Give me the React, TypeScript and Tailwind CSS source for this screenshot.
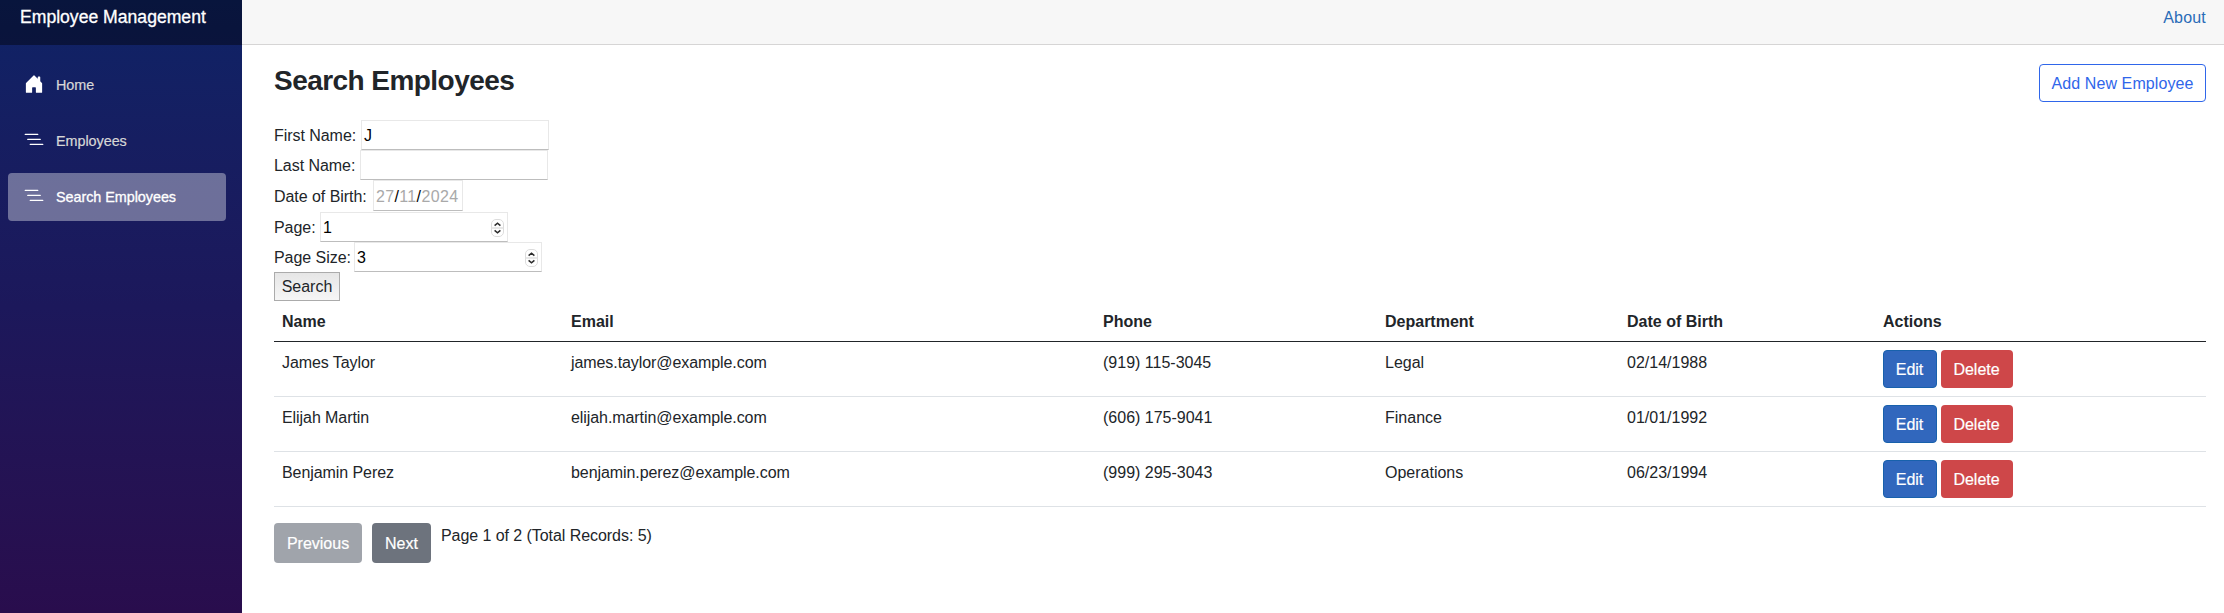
import { ReactNode } from "react";

const employees = [
  { name: "James Taylor", email: "james.taylor@example.com", phone: "(919) 115-3045", department: "Legal", dob: "02/14/1988" },
  { name: "Elijah Martin", email: "elijah.martin@example.com", phone: "(606) 175-9041", department: "Finance", dob: "01/01/1992" },
  { name: "Benjamin Perez", email: "benjamin.perez@example.com", phone: "(999) 295-3043", department: "Operations", dob: "06/23/1994" },
];

const HOUSE =
  "M6.5 14.5v-3.505c0-.245.25-.495.5-.495h2c.25 0 .5.25.5.5v3.5a.5.5 0 0 0 .5.5h4a.5.5 0 0 0 .5-.5v-7a.5.5 0 0 0-.146-.354L13 5.793V2.5a.5.5 0 0 0-.5-.5h-1a.5.5 0 0 0-.5.5v1.293L8.354 1.146a.5.5 0 0 0-.708 0l-6 6A.5.5 0 0 0 1.5 7.5v7a.5.5 0 0 0 .5.5h4a.5.5 0 0 0 .5-.5Z";
const LIST =
  "M4.5 11.5A.5.5 0 0 1 5 11h10a.5.5 0 0 1 0 1H5a.5.5 0 0 1-.5-.5zm-2-4A.5.5 0 0 1 3 7h10a.5.5 0 0 1 0 1H3a.5.5 0 0 1-.5-.5zm-2-4A.5.5 0 0 1 1 3h10a.5.5 0 0 1 0 1H1a.5.5 0 0 1-.5-.5z";

function NavItem({ icon, label, active }: { icon: string; label: string; active?: boolean }) {
  return (
    <a
      className={
        "flex h-12 items-center rounded pl-4 text-[14.4px] tracking-[-0.05px] " +
        (active ? "bg-white/37 text-white [-webkit-text-stroke:0.3px_white]" : "text-[#d7d7d7] [-webkit-text-stroke:0.2px_#d7d7d7]")
      }
    >
      <svg className="mr-3 mb-0.5 size-5" viewBox="0 0 16 16" fill="white">
        <path d={icon} />
      </svg>
      <span className="pt-0.5">{label}</span>
    </a>
  );
}

function Field({ label, labelClass, boxClass, children }: { label: string; labelClass: string; boxClass: string; children?: ReactNode }) {
  return (
    <div className="flex items-center">
      <label className={"shrink-0 whitespace-nowrap pt-0.5 tracking-[-0.05px] " + labelClass}>{label}</label>
      <div className={"flex items-center border border-[#e8e8e8] border-b-[#bdbdbd] bg-white text-black " + boxClass}>
        {children}
      </div>
    </div>
  );
}

function Spinner() {
  return (
    <svg className="ml-auto mr-[3px] h-[18px] w-[13px]" viewBox="0 0 13 18" fill="none">
      <rect x="0.5" y="0.5" width="12" height="17" rx="4.5" fill="white" stroke="#dcdcdc" />
      <path d="M0.5 9h12" stroke="#e0e0e0" strokeWidth="1.5" />
      <path d="M3.6 6.6L6.5 4.2L9.4 6.6M3.6 11.4L6.5 13.8L9.4 11.4" stroke="#2b2b2b" strokeWidth="1.5" />
    </svg>
  );
}

export default function App() {
  return (
    <div className="flex h-[613px] w-[2224px] overflow-hidden bg-white font-['Liberation_Sans',Arial,sans-serif] text-base text-[#212529]">
      <aside className="flex w-[242px] shrink-0 flex-col bg-linear-to-b from-[#0e2366] via-[#1c185b] to-[#290d4d]">
        <div className="flex h-[45px] shrink-0 items-start bg-black/40 pt-[5px] pl-5 text-[17.6px] leading-6 text-white [-webkit-text-stroke:0.3px_white]">
          Employee Management
        </div>
        <nav className="flex flex-col gap-2 pt-4 pr-4 pl-2">
          <NavItem icon={HOUSE} label="Home" />
          <NavItem icon={LIST} label="Employees" />
          <NavItem icon={LIST} label="Search Employees" active />
        </nav>
      </aside>

      <main className="flex min-w-0 flex-1 flex-col">
        <div className="flex h-[45px] shrink-0 items-start justify-end border-b border-[#d6d5d5] bg-[#f7f7f7] pt-[6px] pr-[18px] text-[#2a6cb8]">
          <a className="tracking-[0.2px]">About</a>
        </div>
        <div className="flex flex-col pr-[18px] pl-8">
          <div className="flex h-[75px] items-start justify-between pt-[19px]">
            <h3 className="text-[28px] leading-[34px] font-bold tracking-[-0.55px]">Search Employees</h3>
            <button className="h-[38px] w-[167px] rounded border border-[#2f66ea] pt-0.5 tracking-[0.1px] text-[#2f66ea]">
              Add New Employee
            </button>
          </div>

          <Field label="First Name:" labelClass="w-[87px]" boxClass="h-[30px] w-[188px] pt-0.5 pl-0.5">J</Field>
          <Field label="Last Name:" labelClass="w-[86px]" boxClass="h-[30px] w-[188px]" />
          <Field label="Date of Birth:" labelClass="w-[99px]" boxClass="mb-px h-[31px] w-[90px] pt-0.5 pl-0.5 tracking-[0.35px]">
            <span className="text-[#a9a9a9]">27</span>/<span className="text-[#a9a9a9]">11</span>/
            <span className="text-[#a9a9a9]">2024</span>
          </Field>
          <Field label="Page:" labelClass="w-[46px]" boxClass="h-[30px] w-[188px] pt-0.5 pl-0.5">
            1<Spinner />
          </Field>
          <Field label="Page Size:" labelClass="w-[80px]" boxClass="h-[30px] w-[188px] pt-0.5 pl-0.5">
            3<Spinner />
          </Field>
          <button className="h-[29px] w-[66px] border border-[#ababab] bg-linear-to-b from-[#e6e6e6] to-[#f6f6f6]">
            Search
          </button>

          <table className="w-full table-fixed border-collapse text-left">
            <colgroup>
              <col className="w-[289px]" />
              <col className="w-[532px]" />
              <col className="w-[282px]" />
              <col className="w-[242px]" />
              <col className="w-[256px]" />
              <col />
            </colgroup>
            <thead>
              <tr className="h-[40px] border-b border-[#212529]">
                {["Name", "Email", "Phone", "Department", "Date of Birth", "Actions"].map((h) => (
                  <th key={h} className="px-2 pt-[3px] pb-0 font-bold">{h}</th>
                ))}
              </tr>
            </thead>
            <tbody>
              {employees.map((e) => (
                <tr key={e.email} className="h-[55px] border-b border-[#dee2e6] align-top">
                  <td className="px-2 pt-[9px] tracking-[-0.07px]">{e.name}</td>
                  <td className="px-2 pt-[9px] tracking-[-0.08px]">{e.email}</td>
                  <td className="px-2 pt-[9px]">{e.phone}</td>
                  <td className="px-2 pt-[9px]">{e.department}</td>
                  <td className="px-2 pt-[9px]">{e.dob}</td>
                  <td className="px-2 pt-2">
                    <div className="flex gap-1">
                      <button className="h-[38px] w-[54px] rounded border border-[#1861ac] bg-[#3167bd] pt-[3px] pr-px text-white [-webkit-text-stroke:0.2px_white]">Edit</button>
                      <button className="h-[38px] w-[72px] rounded bg-[#ce4749] pt-[3px] pr-px text-white [-webkit-text-stroke:0.2px_white]">Delete</button>
                    </div>
                  </td>
                </tr>
              ))}
            </tbody>
          </table>

          <div className="flex items-start pt-4">
            <button className="h-10 w-[88px] rounded bg-[#a0a4ab] pt-[3px] text-white [-webkit-text-stroke:0.2px_white]">Previous</button>
            <button className="ml-2.5 h-10 w-[59px] rounded bg-[#6d737d] pt-[3px] text-white [-webkit-text-stroke:0.2px_white]">Next</button>
            <span className="ml-2.5 pt-px tracking-[-0.06px]">Page 1 of 2 (Total Records: 5)</span>
          </div>
        </div>
      </main>
    </div>
  );
}
